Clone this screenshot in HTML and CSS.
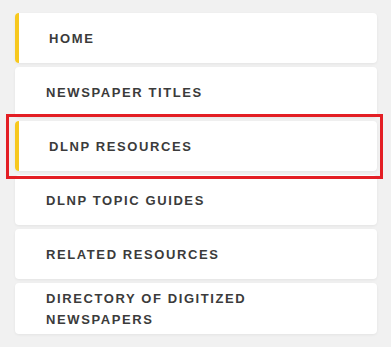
FILE: index.html
```html
<!DOCTYPE html>
<html lang="en">
<head>
  <meta charset="UTF-8">
  <title>Menu</title>
  <link rel="stylesheet" href="styles.css">
</head>
<body>
  <ul class="side-nav">
    <li class="active"><a href="#">Home</a></li>
    <li><a href="#">Newspaper Titles</a></li>
    <li class="active marked"><a href="#">DLNP Resources</a></li>
    <li><a href="#">DLNP Topic Guides</a></li>
    <li><a href="#">Related Resources</a></li>
    <li class="two-line"><a href="#">Directory of Digitized Newspapers</a></li>
  </ul>
</body>
</html>
```

FILE: styles.css
```css
body {
  margin: 0;
  background: #f1f1f1;
  font-family: "Liberation Sans", Arial, sans-serif;
}
.side-nav {
  list-style: none;
  margin: 0;
  padding: 13px 14px 13px 15px;
  display: flex;
  flex-direction: column;
  gap: 4px;
}
.side-nav li {
  position: relative;
  background: #fff;
  border-radius: 4px;
  box-shadow: 0 1px 3px rgba(0,0,0,0.06);
}
.side-nav a {
  display: flex;
  align-items: center;
  min-height: 50px;
  box-sizing: border-box;
  padding: 0 20px 0 31px;
  color: #3b3b3b;
  text-decoration: none;
  text-transform: uppercase;
  font-weight: bold;
  font-size: 13px;
  letter-spacing: 1.6px;
  line-height: 21px;
}
.side-nav .active a {
  border-left: 4px solid #f7c81e;
  border-radius: 4px 0 0 4px;
  padding-left: 30px;
}
.side-nav .two-line a {
  min-height: 51px;
}
.side-nav .marked {
  z-index: 1;
}
.side-nav .marked::after {
  content: "";
  position: absolute;
  left: -9px;
  right: -6px;
  top: -7px;
  bottom: -8px;
  border: 3px solid #e31e24;
  pointer-events: none;
}
```
